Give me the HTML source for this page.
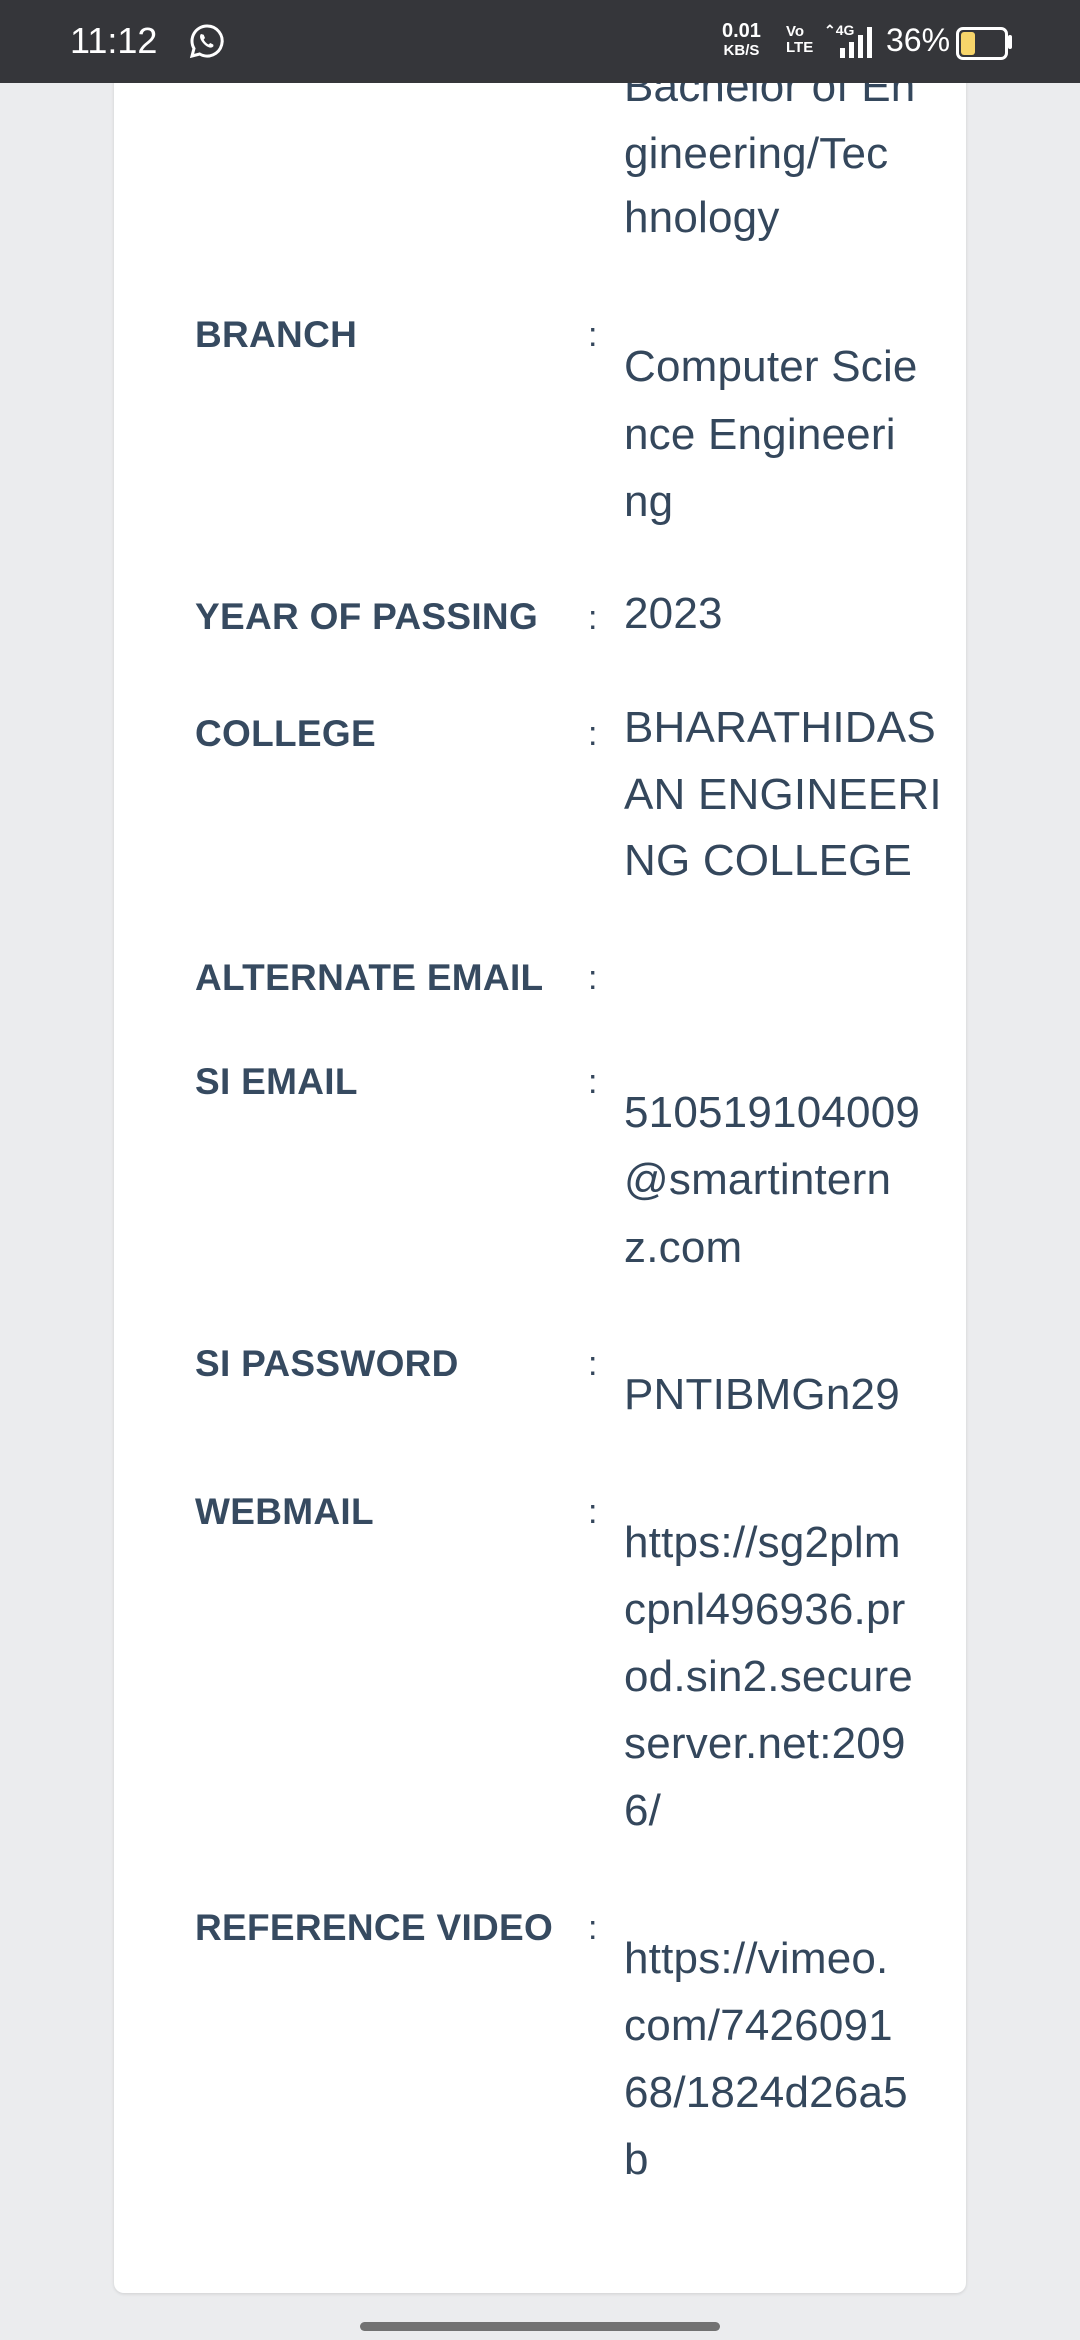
<!DOCTYPE html>
<html><head><meta charset="utf-8"><style>
body{margin:0;width:1080px;height:2340px;background:#ebecee;position:relative;overflow:hidden;font-family:"Liberation Sans",sans-serif;color:#34475c}
.sb{position:absolute;left:0;top:0;width:1080px;height:83px;background:#35363a;color:#fff;z-index:5}
.card{position:absolute;left:114px;top:0;width:852px;height:2293px;background:#fff;border-radius:0 0 10px 10px;box-shadow:0 1px 3px rgba(0,0,0,.12)}
.t{position:absolute;line-height:66px;height:66px;white-space:nowrap}
.l{left:195px;font-weight:bold;font-size:37px;letter-spacing:0.3px;color:#364a60}
.c{left:588px;font-size:34px}
.v{left:624px;font-size:44px;letter-spacing:0.2px}
.home{position:absolute;left:360px;top:2322px;width:360px;height:9px;border-radius:5px;background:#727272}
.w{position:relative;top:5px}
</style></head><body>
<div class="card"></div>
<div class="w">
<div class="t v" style="top:49px">Bachelor of En</div>
<div class="t v" style="top:116px">gineering/Tec</div>
<div class="t v" style="top:180px">hnology</div>

<div class="t l" style="top:297px">BRANCH</div>
<div class="t c" style="top:297px">:</div>
<div class="t v" style="top:329px">Computer Scie</div>
<div class="t v" style="top:397px">nce Engineeri</div>
<div class="t v" style="top:464px">ng</div>

<div class="t l" style="top:579px">YEAR OF PASSING</div>
<div class="t c" style="top:580px">:</div>
<div class="t v" style="top:576px">2023</div>

<div class="t l" style="top:696px">COLLEGE</div>
<div class="t c" style="top:696px">:</div>
<div class="t v" style="top:690px">BHARATHIDAS</div>
<div class="t v" style="top:757px">AN ENGINEERI</div>
<div class="t v" style="top:823px">NG COLLEGE</div>

<div class="t l" style="top:940px">ALTERNATE EMAIL</div>
<div class="t c" style="top:940px">:</div>

<div class="t l" style="top:1044px">SI EMAIL</div>
<div class="t c" style="top:1044px">:</div>
<div class="t v" style="top:1075px">510519104009</div>
<div class="t v" style="top:1142px">@smartintern</div>
<div class="t v" style="top:1210px">z.com</div>

<div class="t l" style="top:1326px">SI PASSWORD</div>
<div class="t c" style="top:1326px">:</div>
<div class="t v" style="top:1357px">PNTIBMGn29</div>

<div class="t l" style="top:1474px">WEBMAIL</div>
<div class="t c" style="top:1474px">:</div>
<div class="t v" style="top:1505px">https://sg2plm</div>
<div class="t v" style="top:1572px">cpnl496936.pr</div>
<div class="t v" style="top:1639px">od.sin2.secure</div>
<div class="t v" style="top:1706px">server.net:209</div>
<div class="t v" style="top:1773px">6/</div>

<div class="t l" style="top:1890px">REFERENCE VIDEO</div>
<div class="t c" style="top:1890px">:</div>
<div class="t v" style="top:1921px">https://vimeo.</div>
<div class="t v" style="top:1988px">com/7426091</div>
<div class="t v" style="top:2055px">68/1824d26a5</div>
<div class="t v" style="top:2122px">b</div>
</div>
<div class="sb">
<div style="position:absolute;left:70px;top:20px;font-size:36px">11:12</div>
<svg style="position:absolute;left:188px;top:22px" width="38" height="38" viewBox="0 0 38 38"><path d="M19 4a15 15 0 0 0-13 22.5L4 34l7.7-2A15 15 0 1 0 19 4z" fill="none" stroke="#fff" stroke-width="3"/><path d="M13 12c-1 1-1.5 3 0 6s5 6.5 8.5 7.5c2 .5 3.5-.5 4-1.5l-.3-1.5-3-1.5-1.5 1.5c-2-.8-4-2.8-5-5l1.3-1.5-1.3-3.2z" fill="#fff"/></svg>
<div style="position:absolute;left:722px;top:22px;font-size:20px;line-height:18px;text-align:center;font-weight:bold">0.01<br><span style="font-size:15px">KB/S</span></div>
<div style="position:absolute;left:786px;top:24px;font-size:15px;line-height:16px;font-weight:bold">Vo<br>LTE</div>
<div style="position:absolute;left:824px;top:22px;font-size:14px;font-weight:bold">⌃4G</div>
<div style="position:absolute;left:840px;top:48px;width:5px;height:10px;background:#fff"></div>
<div style="position:absolute;left:849px;top:42px;width:5px;height:16px;background:#fff"></div>
<div style="position:absolute;left:858px;top:35px;width:5px;height:23px;background:#fff"></div>
<div style="position:absolute;left:867px;top:27px;width:5px;height:31px;background:#fff"></div>
<div style="position:absolute;left:886px;top:22px;font-size:32px">36%</div>
<div style="position:absolute;left:956px;top:27px;width:46px;height:27px;border:3px solid #fff;border-radius:7px"></div>
<div style="position:absolute;left:961px;top:32px;width:14px;height:23px;background:#f7d56a;border-radius:3px"></div>
<div style="position:absolute;left:1008px;top:35px;width:4px;height:14px;background:#fff;border-radius:2px"></div>
</div>
<div class="home"></div>
</body></html>
